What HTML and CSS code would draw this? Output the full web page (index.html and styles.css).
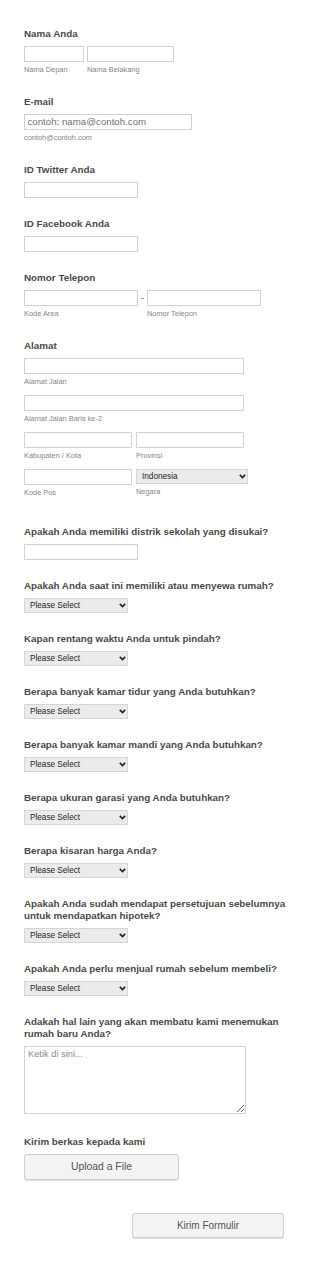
FILE: index.html
```html
<!DOCTYPE html>
<html lang="id">
<head>
<meta charset="utf-8">
<title>Formulir Rumah</title>
<link rel="stylesheet" href="styles.css">
</head>
<body>
<form class="form">
  <div class="field">
    <label class="label">Nama Anda</label>
    <div class="row gap3">
      <div class="col"><input class="input w60" type="text"><span class="sublabel">Nama Depan</span></div>
      <div class="col"><input class="input w87" type="text"><span class="sublabel">Nama Belakang</span></div>
    </div>
  </div>

  <div class="field">
    <label class="label">E-mail</label>
    <input class="input w168 email" type="text" placeholder="contoh: nama@contoh.com">
    <span class="sublabel">contoh@contoh.com</span>
  </div>

  <div class="field">
    <label class="label">ID Twitter Anda</label>
    <input class="input w114" type="text">
  </div>

  <div class="field">
    <label class="label">ID Facebook Anda</label>
    <input class="input w114" type="text">
  </div>

  <div class="field">
    <label class="label">Nomor Telepon</label>
    <div class="row">
      <div class="col"><input class="input w114" type="text"><span class="sublabel">Kode Area</span></div>
      <span class="dash">-</span>
      <div class="col"><input class="input w114" type="text"><span class="sublabel">Nomor Telepon</span></div>
    </div>
  </div>

  <div class="field field-address">
    <label class="label">Alamat</label>
    <div class="addr-row">
      <input class="input w220" type="text"><span class="sublabel">Alamat Jalan</span>
    </div>
    <div class="addr-row">
      <input class="input w220" type="text"><span class="sublabel">Alamat Jalan Baris ke-2</span>
    </div>
    <div class="addr-row row gap4">
      <div class="col"><input class="input w108" type="text"><span class="sublabel">Kabupaten / Kota</span></div>
      <div class="col"><input class="input w108" type="text"><span class="sublabel">Provinsi</span></div>
    </div>
    <div class="addr-row row gap4">
      <div class="col"><input class="input w108" type="text"><span class="sublabel">Kode Pos</span></div>
      <div class="col">
        <div class="select-wrap w112">
          <select class="select">
            <option>Indonesia</option>
          </select>
          <svg class="chev" width="7" height="5" viewBox="0 0 7 5"><polyline points="0.8,0.9 3.5,3.6 6.2,0.9" fill="none" stroke="#222" stroke-width="1.6"/></svg>
        </div>
        <span class="sublabel">Negara</span>
      </div>
    </div>
  </div>

  <div class="field">
    <label class="label">Apakah Anda memiliki distrik sekolah yang disukai?</label>
    <input class="input w114" type="text">
  </div>

  <div class="field">
    <label class="label">Apakah Anda saat ini memiliki atau menyewa rumah?</label>
    <div class="select-wrap w104">
      <select class="select"><option>Please Select</option></select>
      <svg class="chev" width="7" height="5" viewBox="0 0 7 5"><polyline points="0.8,0.9 3.5,3.6 6.2,0.9" fill="none" stroke="#222" stroke-width="1.6"/></svg>
    </div>
  </div>

  <div class="field">
    <label class="label">Kapan rentang waktu Anda untuk pindah?</label>
    <div class="select-wrap w104">
      <select class="select"><option>Please Select</option></select>
      <svg class="chev" width="7" height="5" viewBox="0 0 7 5"><polyline points="0.8,0.9 3.5,3.6 6.2,0.9" fill="none" stroke="#222" stroke-width="1.6"/></svg>
    </div>
  </div>

  <div class="field">
    <label class="label">Berapa banyak kamar tidur yang Anda butuhkan?</label>
    <div class="select-wrap w104">
      <select class="select"><option>Please Select</option></select>
      <svg class="chev" width="7" height="5" viewBox="0 0 7 5"><polyline points="0.8,0.9 3.5,3.6 6.2,0.9" fill="none" stroke="#222" stroke-width="1.6"/></svg>
    </div>
  </div>

  <div class="field">
    <label class="label">Berapa banyak kamar mandi yang Anda butuhkan?</label>
    <div class="select-wrap w104">
      <select class="select"><option>Please Select</option></select>
      <svg class="chev" width="7" height="5" viewBox="0 0 7 5"><polyline points="0.8,0.9 3.5,3.6 6.2,0.9" fill="none" stroke="#222" stroke-width="1.6"/></svg>
    </div>
  </div>

  <div class="field">
    <label class="label">Berapa ukuran garasi yang Anda butuhkan?</label>
    <div class="select-wrap w104">
      <select class="select"><option>Please Select</option></select>
      <svg class="chev" width="7" height="5" viewBox="0 0 7 5"><polyline points="0.8,0.9 3.5,3.6 6.2,0.9" fill="none" stroke="#222" stroke-width="1.6"/></svg>
    </div>
  </div>

  <div class="field">
    <label class="label">Berapa kisaran harga Anda?</label>
    <div class="select-wrap w104">
      <select class="select"><option>Please Select</option></select>
      <svg class="chev" width="7" height="5" viewBox="0 0 7 5"><polyline points="0.8,0.9 3.5,3.6 6.2,0.9" fill="none" stroke="#222" stroke-width="1.6"/></svg>
    </div>
  </div>

  <div class="field">
    <label class="label narrow">Apakah Anda sudah mendapat persetujuan sebelumnya untuk mendapatkan hipotek?</label>
    <div class="select-wrap w104">
      <select class="select"><option>Please Select</option></select>
      <svg class="chev" width="7" height="5" viewBox="0 0 7 5"><polyline points="0.8,0.9 3.5,3.6 6.2,0.9" fill="none" stroke="#222" stroke-width="1.6"/></svg>
    </div>
  </div>

  <div class="field">
    <label class="label">Apakah Anda perlu menjual rumah sebelum membeli?</label>
    <div class="select-wrap w104">
      <select class="select"><option>Please Select</option></select>
      <svg class="chev" width="7" height="5" viewBox="0 0 7 5"><polyline points="0.8,0.9 3.5,3.6 6.2,0.9" fill="none" stroke="#222" stroke-width="1.6"/></svg>
    </div>
  </div>

  <div class="field field-textarea">
    <label class="label narrow">Adakah hal lain yang akan membatu kami menemukan rumah baru Anda?</label>
    <textarea class="textarea" placeholder="Ketik di sini..."></textarea>
  </div>

  <div class="field">
    <label class="label">Kirim berkas kepada kami</label>
    <button class="btn btn-upload" type="button">Upload a File</button>
  </div>

  <div class="actions">
    <button class="btn btn-submit" type="submit">Kirim Formulir</button>
  </div>
</form>
</body>
</html>
```

FILE: styles.css
```css
* {
  box-sizing: border-box;
}

html, body {
  margin: 0;
  padding: 0;
  background: #ffffff;
}

body {
  font-family: "Liberation Sans", Arial, sans-serif;
  color: #555555;
}

.form {
  padding: 27.5px 0 0 24px;
}

.field {
  margin-bottom: 20px;
}

.field-address {
  padding-bottom: 7px;
}

.field-textarea {
  margin-bottom: 22px;
}

.label {
  display: block;
  font-size: 9.84px;
  font-weight: bold;
  line-height: 12px;
  color: #4a4a4a;
  margin-bottom: 6px;
}

.label.narrow {
  width: 262px;
}

.row {
  display: flex;
  align-items: flex-start;
}

.gap3 {
  gap: 3px;
}

.gap4 {
  gap: 4px;
}

.col {
  display: flex;
  flex-direction: column;
}

.addr-row {
  margin-bottom: 7px;
}

.addr-row:last-child {
  margin-bottom: 0;
}

.input {
  display: block;
  height: 16px;
  margin: 0;
  padding: 0 2.5px;
  border: 1px solid #d2d2d2;
  border-radius: 0;
  background: #ffffff;
  font-family: "Liberation Sans", Arial, sans-serif;
  font-size: 9.3px;
  color: #333333;
  outline: none;
}

.input.email {
  font-size: 9.7px;
}

.input::placeholder {
  color: #707070;
}

.w60 { width: 60px; }
.w87 { width: 87px; }
.w104 { width: 104px; }
.w108 { width: 108px; }
.w112 { width: 112px; }
.w114 { width: 114px; }
.w168 { width: 168px; }
.w220 { width: 220px; }

.sublabel {
  display: block;
  margin-top: 1px;
  font-size: 7.4px;
  line-height: 13px;
  color: #858585;
}

.dash {
  width: 9px;
  height: 16px;
  line-height: 16px;
  text-align: center;
  font-size: 9px;
  color: #555555;
}

.select-wrap {
  position: relative;
  height: 15px;
}

.select {
  display: block;
  width: 100%;
  height: 15px;
  margin: 0;
  padding: 0 0 0 5px;
  border: 1px solid #d6d6d6;
  border-radius: 0;
  background: #ebebeb;
  -webkit-appearance: none;
  appearance: none;
  font-family: "Liberation Sans", Arial, sans-serif;
  font-size: 8.2px;
  line-height: 13px;
  color: #1e1e1e;
  outline: none;
}

.chev {
  position: absolute;
  right: 2.5px;
  top: 5px;
  pointer-events: none;
}

.textarea {
  display: block;
  width: 222px;
  height: 68px;
  margin: 0;
  padding: 2px 3px;
  border: 1px solid #d2d2d2;
  border-radius: 0;
  font-family: "Liberation Sans", Arial, sans-serif;
  font-size: 9.3px;
  line-height: 11px;
  color: #333333;
  resize: both;
  outline: none;
}

.textarea::placeholder {
  color: #888888;
}

.btn {
  display: block;
  margin: 0;
  padding: 0;
  border: 1px solid #cfcfcf;
  border-radius: 3px;
  background: #f3f3f3;
  box-shadow: 0 1px 0 #dedede;
  font-family: "Liberation Sans", Arial, sans-serif;
  font-size: 10px;
  color: #555555;
  text-align: center;
}

.btn-upload {
  width: 155px;
  height: 26px;
  font-size: 10.4px;
}

.actions {
  padding: 13px 0 23px 108px;
}

.btn-submit {
  width: 152px;
  height: 25px;
}
```
